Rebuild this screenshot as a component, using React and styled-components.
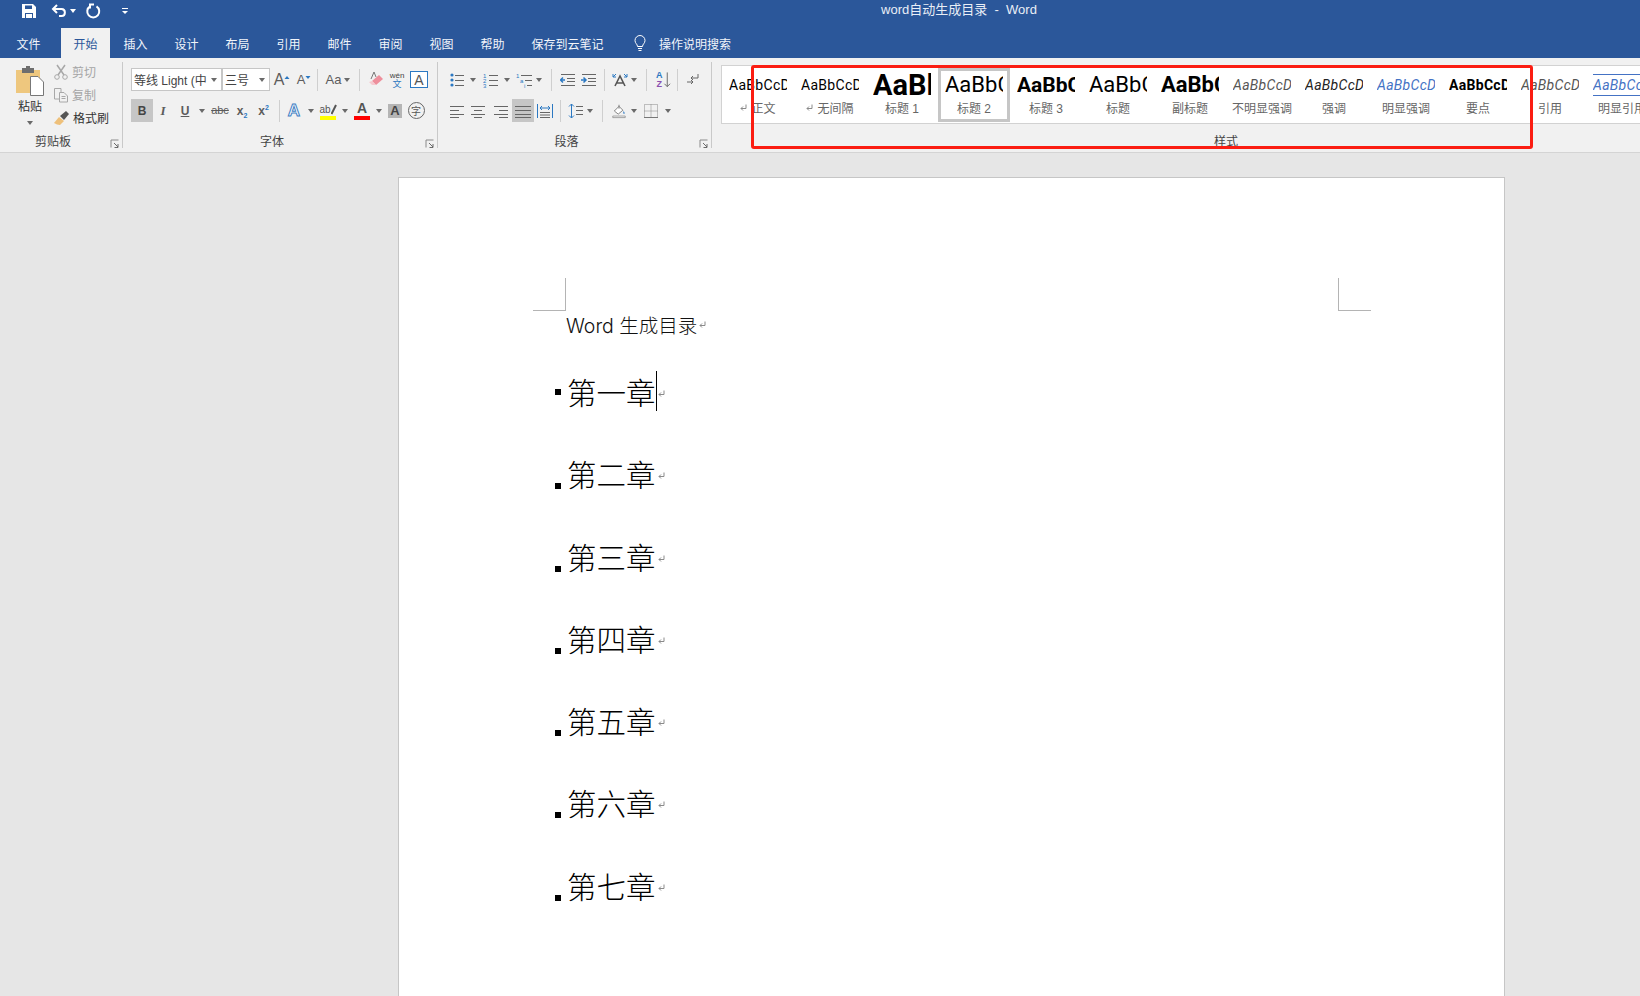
import React from 'react';
import styled, {createGlobalStyle, css} from 'styled-components';

const cjk = `"Liberation Sans", "Noto Sans CJK SC", sans-serif`;

const GlobalStyle = createGlobalStyle`
  html, body {
    margin: 0;
    padding: 0;
    height: 996px;
    overflow: hidden;
    background: #e6e6e6;
    font-family: ${cjk};
  }
`;

const Window = styled.div`
  width: 1640px;
  height: 996px;
  display: flex;
  flex-direction: column;
  position: relative;
  overflow: hidden;
`;

/* title bar + tabs */
const TitleBar = styled.div`
  height: 28px;
  background: #2b579a;
  display: flex;
  align-items: center;
`;

const QuickBar = styled.div`
  width: 278px;
  display: flex;
  align-items: center;
  padding-left: 21px;
  margin-top: -6px;
  box-sizing: border-box;
`;

const QuickBtn = styled.div`
  width: ${p => p.$w}px;
  display: flex;
  align-items: center;
`;

const DocTitle = styled.div`
  flex: 1;
  text-align: center;
  color: #e9eef6;
  font-size: 13px;
  white-space: pre;
  margin-top: -12px;
`;

const TabBar = styled.div`
  height: 30px;
  background: #2b579a;
  display: flex;
  padding-left: 3px;
`;

const Tab = styled.div`
  width: ${p => p.$w || 51}px;
  display: flex;
  align-items: center;
  justify-content: center;
  color: #f2f5fa;
  font-size: 12px;
  white-space: nowrap;
  ${p => p.$active && css`
    background: #f1f1f1;
    color: #2b579a;
    margin: 0 0 0 7px;
  `}
`;

const SearchHint = styled.div`
  display: flex;
  align-items: center;
  gap: 12px;
  color: #f2f5fa;
  font-size: 12px;
  margin-left: 16px;
`;

/* ribbon */
const Ribbon = styled.div`
  height: 94px;
  background: #f1f1f1;
  border-bottom: 1px solid #d4d4d4;
  display: flex;
  overflow: hidden;
`;

const Group = styled.div`
  width: ${p => p.$w ? `${p.$w}px` : 'auto'};
  flex: ${p => p.$w ? '0 0 auto' : '1'};
  min-width: 0;
  box-sizing: border-box;
  height: 86px;
  margin-top: 4px;
  display: flex;
  flex-direction: column;
  border-right: ${p => p.$w ? '1px solid #c9c9c9' : '0'};
`;

const Rows = styled.div`
  display: flex;
  flex-direction: column;
  gap: 8px;
  height: 54px;
  padding: 6px 0 0 ${p => p.$pl}px;
`;

const Row = styled.div`
  display: flex;
  align-items: center;
  height: 23px;
`;

const GroupLabel = styled.div`
  margin: auto 3px -1px 0;
  height: 17px;
  flex: none;
  display: flex;
  align-items: center;
  font-size: 12px;
  color: #444;
  span {
    flex: 1;
    text-align: center;
  }
`;

const Launcher = styled.svg`
  width: 13px;
  height: 9px;
  margin-top: 6px;
`;

const Tool = styled.div`
  width: ${p => p.$w}px;
  height: 23px;
  flex: none;
  display: flex;
  align-items: center;
  justify-content: center;
  color: #5c5c5c;
  ${p => p.$on && css`background: #c6c6c6;`}
`;

const Caret = styled.i`
  display: block;
  flex: none;
  width: 0;
  height: 0;
  margin-left: ${p => p.$ml || 0}px;
  border-left: 3.5px solid transparent;
  border-right: 3.5px solid transparent;
  border-top: 4px solid ${p => p.$c || '#6a6a6a'};
`;

const Sep = styled.div`
  width: ${p => p.$w || 6}px;
  flex: none;
  height: 22px;
  display: flex;
  justify-content: center;
  &::after {
    content: '';
    width: 1px;
    background: #cfcfcf;
  }
`;

const Glyph = styled.span`
  font-family: ${p => p.$serif ? '"Liberation Serif", serif' : '"Liberation Sans", sans-serif'};
  font-size: ${p => p.$s || 14}px;
  font-weight: ${p => p.$b ? 700 : 400};
  font-style: ${p => p.$i ? 'italic' : 'normal'};
  text-decoration: ${p => p.$u ? 'underline' : p.$st ? 'line-through' : 'none'};
  color: ${p => p.$c || '#5c5c5c'};
  line-height: 1;
`;

const OutlineA = styled(Glyph)`
  -webkit-text-stroke: 1px #3f7fc4;
`;

const SortLetters = styled(Glyph)`
  line-height: 9px;
  text-align: center;
  em {
    font-style: normal;
    color: #8a4fb0;
  }
`;

const Sub = styled.sub`
  font-size: 7px;
  color: #2b78c2;
  vertical-align: -3px;
  line-height: 0;
`;

const Sup = styled.sup`
  font-size: 7px;
  color: #2b78c2;
  vertical-align: 5px;
  line-height: 0;
`;

/* clipboard */
const ClipBody = styled.div`
  display: flex;
  height: 70px;
`;

const PasteCol = styled.div`
  width: 38px;
  margin-left: 11px;
  display: flex;
  flex-direction: column;
  align-items: center;
  font-size: 12px;
  color: #333;
  span { margin-top: 0; }
  i { margin-top: 7px; }
  svg { margin-top: 3px; }
`;

const ClipList = styled.div`
  display: flex;
  flex-direction: column;
  margin-left: 4px;
  margin-top: -2px;
`;

const ClipItem = styled.div`
  height: 23px;
  display: flex;
  align-items: center;
  gap: 3px;
  font-size: 12px;
  color: ${p => p.$off ? '#a5a5a5' : '#333'};
`;

/* font pickers */
const Picker = styled.div`
  width: ${p => p.$w}px;
  height: 23px;
  flex: none;
  box-sizing: border-box;
  background: #fff;
  border: 1px solid #c6c6c6;
  display: flex;
  align-items: center;
  gap: 3px;
  padding: 0 4px 0 2px;
  font-size: 12px;
  color: #444;
  span {
    flex: 1;
    min-width: 0;
    white-space: nowrap;
  }
`;

const BoxA = styled.div`
  width: 16px;
  height: 15px;
  border: 1px solid #2b78c2;
  display: flex;
  align-items: center;
  justify-content: center;
  font-size: 14px;
  color: #555;
  background: #fff;
`;

const ShadeA = styled.div`
  width: 14px;
  height: 14px;
  background: #b5b5b5;
  display: flex;
  align-items: center;
  justify-content: center;
  font-size: 13px;
  font-weight: 700;
  color: #444;
`;

const CircleChar = styled.div`
  width: 15px;
  height: 15px;
  border: 1px solid #666;
  border-radius: 50%;
  display: flex;
  align-items: center;
  justify-content: center;
  font-size: 10px;
  color: #555;
`;

const ColorA = styled.div`
  display: flex;
  flex-direction: column;
  align-items: center;
  width: 16px;
  font-size: 14px;
  line-height: 13px;
  font-weight: 700;
  color: #555;
  &::after {
    content: '';
    width: 16px;
    height: 4px;
    margin-top: 1px;
    background: ${p => p.$c};
  }
`;

const PenMark = styled.div`
  height: 13px;
  display: flex;
  align-items: flex-end;
`;

const Wen = styled.div`
  display: flex;
  flex-direction: column;
  align-items: center;
  font-size: 8px;
  line-height: 8px;
  color: #444;
  b {
    font-weight: 400;
    font-size: 9px;
    color: #2b78c2;
  }
`;

/* styles gallery */
const StylesGroup = styled(Group)`
  padding-left: 9px;
  overflow: hidden;
`;

const Gallery = styled.div`
  height: 59px;
  margin-top: 3px;
  box-sizing: border-box;
  background: #fff;
  border: 1px solid #d2d2d2;
  border-right: 0;
  width: 1000px;
  display: flex;
  align-items: center;
  flex: none;
`;

const StyleItem = styled.div`
  width: 72px;
  height: 54px;
  flex: none;
  box-sizing: border-box;
  border: 3px solid ${p => p.$on ? '#c6c6c6' : 'transparent'};
  display: flex;
  flex-direction: column;
  align-items: center;
`;

const Sample = styled.div`
  width: 58px;
  height: 28px;
  overflow: hidden;
  white-space: nowrap;
  display: flex;
  align-items: center;
  font-family: Roboto, sans-serif;
  font-size: ${p => p.$s}px;
  font-weight: ${p => p.$b ? 700 : 400};
  font-style: ${p => p.$i ? 'italic' : 'normal'};
  letter-spacing: ${p => p.$s < 20 ? '0.3px' : '0'};
  color: ${p => p.$c || '#000'};
  span {
    ${p => p.$lined && css`
      border-top: 1px solid #4472c4;
      border-bottom: 1px solid #4472c4;
      padding: 2px 0;
    `}
  }
`;

const StyleName = styled.div`
  font-size: 12px;
  color: #666;
  white-space: nowrap;
  display: flex;
  align-items: center;
  gap: 4px;
`;

const StylesLabel = styled(GroupLabel)`
  width: 1010px;
`;

/* document */
const Workspace = styled.div`
  flex: 1;
  background: #e6e6e6;
  padding: 24px 0 0 398px;
  overflow: hidden;
`;

const Page = styled.div`
  width: 1107px;
  height: 900px;
  box-sizing: border-box;
  background: #fff;
  border: 1px solid #c6c6c6;
  padding: 100px 133px 0 134px;
`;

const Marks = styled.div`
  display: flex;
  justify-content: space-between;
`;

const Mark = styled.div`
  width: 32px;
  height: 32px;
  border-bottom: 1px solid #b4b4b4;
  ${p => p.$right
    ? css`border-left: 1px solid #b4b4b4;`
    : css`border-right: 1px solid #b4b4b4;`}
`;

const DocTitleLine = styled.div`
  margin: -1px 0 0 33px;
  height: 28px;
  display: flex;
  align-items: center;
  font-family: Inter, "Noto Sans CJK SC", sans-serif;
  font-weight: 300;
  font-size: 19.5px;
  color: #111;
`;

const Chapters = styled.div`
  margin-top: 32px;
  display: flex;
  flex-direction: column;
`;

const Chapter = styled.div`
  height: 82.25px;
  display: flex;
  align-items: flex-start;
  font-family: "Noto Sans CJK SC", sans-serif;
  font-weight: 300;
  font-size: 29.5px;
  line-height: 42px;
  color: #000;
`;

const Bullet = styled.i`
  width: 6px;
  height: 6px;
  background: #000;
  flex: none;
  margin: ${p => p.$low ? '31px' : '19px'} 6px 0 22px;
`;

const ChapterText = styled.div`
  position: relative;
`;

const TextCaret = styled.i`
  position: absolute;
  right: -1px;
  top: 1px;
  width: 1px;
  height: 40px;
  background: #000;
`;

const ParaMark = styled.svg`
  width: 7px;
  height: 7px;
  flex: none;
  margin: ${p => p.$m || '0 0 0 2px'};
`;

/* annotation drawn on the screenshot */
const Annotation = styled.div`
  position: absolute;
  left: 751px;
  top: 65px;
  width: 782px;
  height: 84px;
  box-sizing: border-box;
  border: 3px solid #fb1d12;
  border-radius: 3px;
  pointer-events: none;
`;

const Ico = ({w = 16, h = 16, children, ...rest}) => (
  <svg width={w} height={h} viewBox={`0 0 ${w} ${h}`} fill="none" {...rest}>{children}</svg>
);

const ParaIcon = ({m}) => (
  <ParaMark $m={m} viewBox="0 0 7 7" fill="none" stroke="#8a8a8a" strokeWidth="1">
    <path d="M6 0.5V4.5H1M3 2.5L1 4.5L3 6.5" />
  </ParaMark>
);

const Lines = ({ys, x1 = 1, x2 = 15, ...rest}) => (
  <Ico {...rest}>
    {ys.map((y, i) => {
      const a = Array.isArray(x1) ? x1[i] : x1;
      const b = Array.isArray(x2) ? x2[i] : x2;
      return <path key={i} d={`M${a} ${y}.5H${b}`} stroke="#666" />;
    })}
  </Ico>
);

const LaunchIcon = () => (
  <Launcher viewBox="0 0 13 9" fill="none">
    <path d="M5 8.5V1H12.5" stroke="#8a8a8a" />
    <path d="M8 4L12 8M12 5V8.5H8.5" stroke="#6a6a6a" />
  </Launcher>
);

function Label({text}) {
  return <GroupLabel><span>{text}</span><LaunchIcon /></GroupLabel>;
}

const styleList = [
  {name: '正文', s: 14, para: true},
  {name: '无间隔', s: 14, para: true},
  {name: '标题 1', s: 29, b: true, text: 'AaBl'},
  {name: '标题 2', s: 22, on: true, text: 'AaBbC'},
  {name: '标题 3', s: 21, b: true, text: 'AaBbC'},
  {name: '标题', s: 22, text: 'AaBbC'},
  {name: '副标题', s: 22, b: true, text: 'AaBbC'},
  {name: '不明显强调', s: 14, i: true, c: '#555'},
  {name: '强调', s: 14, i: true, c: '#222'},
  {name: '明显强调', s: 14, i: true, c: '#4472c4'},
  {name: '要点', s: 14, b: true},
  {name: '引用', s: 14, i: true, c: '#555'},
  {name: '明显引用', s: 14, i: true, c: '#4472c4', lined: true},
];

const chapters = ['第一章', '第二章', '第三章', '第四章', '第五章', '第六章', '第七章'];

export default function App() {
  return (
    <Window>
      <GlobalStyle />
      <TitleBar>
        <QuickBar>
          <QuickBtn $w={30}>
            <Ico>
              <path d="M1 1H12L15 4V15H1Z" fill="#fff" />
              <path d="M4 2.5H11V6H4Z" fill="#2b579a" />
              <path d="M4 10H12V15H4Z" fill="#2b579a" />
              <path d="M5 11H11V15H5Z" fill="#fff" />
            </Ico>
          </QuickBtn>
          <QuickBtn $w={35}>
            <Ico>
              <path d="M6 2L2 6L6 10M2.5 6H10.5C15 6 15 13 10.5 13H8" stroke="#fff" strokeWidth="2" />
            </Ico>
            <Caret $c="#fff" $ml={3} />
          </QuickBtn>
          <QuickBtn $w={35}>
            <Ico style={{marginLeft: -1}}>
              <path d="M5 3.4A6 6 0 1 0 11.5 3.4" stroke="#fff" strokeWidth="2" />
              <path d="M9 1.5H5V5.5" stroke="#fff" strokeWidth="2" />
            </Ico>
          </QuickBtn>
          <QuickBtn $w={12}>
            <Ico w={8} h={8}>
              <path d="M1 1.5H7" stroke="#fff" />
              <path d="M1 4L4 7L7 4Z" fill="#fff" />
            </Ico>
          </QuickBtn>
        </QuickBar>
        <DocTitle>word自动生成目录  -  Word</DocTitle>
      </TitleBar>

      <TabBar>
        <Tab>文件</Tab>
        <Tab $active $w={49}>开始</Tab>
        <Tab>插入</Tab>
        <Tab>设计</Tab>
        <Tab>布局</Tab>
        <Tab>引用</Tab>
        <Tab>邮件</Tab>
        <Tab>审阅</Tab>
        <Tab>视图</Tab>
        <Tab>帮助</Tab>
        <Tab $w={99}>保存到云笔记</Tab>
        <SearchHint>
          <Ico w={14} h={18}>
            <path d="M4.5 12.5C4.5 10 2 9.5 2 6.5A5 5 0 0 1 12 6.5C12 9.5 9.5 10 9.5 12.5Z" stroke="#fff" />
            <path d="M5 14.5H9M5.5 16.5H8.5" stroke="#fff" />
          </Ico>
          操作说明搜索
        </SearchHint>
      </TabBar>

      <Ribbon>
        <Group $w={123}>
          <ClipBody>
            <PasteCol>
              <Ico w={28} h={32}>
                <path d="M0 5H24V28H0Z" fill="#eec77e" />
                <path d="M6 3H18V8H6Z" fill="#6e6e6e" />
                <path d="M10 1H14V4H10Z" fill="#6e6e6e" />
                <path d="M14.5 11.5H22L27.5 17V30.5H14.5Z" fill="#fff" stroke="#777" />
              </Ico>
              <span>粘贴</span>
              <Caret />
            </PasteCol>
            <ClipList>
              <ClipItem $off>
                <Ico>
                  <path d="M4 1L11 11M12 1L5 11" stroke="#a8a8a8" strokeWidth="1.5" />
                  <circle cx="4" cy="13" r="2.3" stroke="#a8a8a8" />
                  <circle cx="12" cy="13" r="2.3" stroke="#a8a8a8" />
                </Ico>
                剪切
              </ClipItem>
              <ClipItem $off>
                <Ico>
                  <path d="M1.5 1.5H8L8 12H1.5Z" fill="#f1f1f1" stroke="#a8a8a8" />
                  <path d="M6.5 5.5H11L14.5 9V15H6.5Z" fill="#f1f1f1" stroke="#a8a8a8" />
                  <path d="M8.5 9.5H12.5M8.5 11.5H12.5" stroke="#a8a8a8" />
                </Ico>
                复制
              </ClipItem>
              <ClipItem>
                <Ico w={17}>
                  <path d="M1 13L6 7L11 11L7 15C5 15 3 14 1 13Z" fill="#eec07a" />
                  <path d="M7 6L13 1L16 4L11 10Z" fill="#555" />
                </Ico>
                格式刷
              </ClipItem>
            </ClipList>
          </ClipBody>
          <Label text="剪贴板" />
        </Group>

        <Group $w={315}>
          <Rows $pl={8}>
            <Row>
              <Picker $w={91}><span>等线 Light (中</span><Caret /></Picker>
              <Picker $w={48}><span>三号</span><Caret /></Picker>
              <Tool $w={24}>
                <Glyph $s={16}>A</Glyph>
                <Ico w={6} h={12}><path d="M0.5 5L3 2L5.5 5Z" fill="#2b78c2" /></Ico>
              </Tool>
              <Tool $w={20}>
                <Glyph $s={13}>A</Glyph>
                <Ico w={6} h={12}><path d="M0.5 2H5.5L3 5Z" fill="#2b78c2" /></Ico>
              </Tool>
              <Sep />
              <Tool $w={36}>
                <Glyph $s={13}>Aa</Glyph>
                <Caret $ml={3} />
              </Tool>
              <Sep />
              <Tool $w={28}>
                <Ico w={18} h={18}>
                  <path d="M9 14L16 8L12 4L5 10Z" fill="#ee8f9c" />
                  <path d="M5 10L9 14H5L2 11Z" fill="#f6c9cf" />
                  <path d="M4 8L7 1L9 6" stroke="#777" />
                </Ico>
              </Tool>
              <Tool $w={14}>
                <Wen>wén<b>文</b></Wen>
              </Tool>
              <Tool $w={30}>
                <BoxA>A</BoxA>
              </Tool>
            </Row>
            <Row>
              <Tool $w={22} $on><Glyph $b $s={12} $c="#444">B</Glyph></Tool>
              <Tool $w={20}><Glyph $i $b $serif $s={13}>I</Glyph></Tool>
              <Tool $w={24}><Glyph $u $b $s={12}>U</Glyph></Tool>
              <Tool $w={10}><Caret /></Tool>
              <Tool $w={26}><Glyph $st $s={11}>abc</Glyph></Tool>
              <Tool $w={18}><Glyph $b $s={12}>x<Sub>2</Sub></Glyph></Tool>
              <Tool $w={25}><Glyph $b $s={12}>x<Sup>2</Sup></Glyph></Tool>
              <Sep />
              <Tool $w={24}>
                <OutlineA $b $s={17} $c="#fff">A</OutlineA>
              </Tool>
              <Tool $w={10}><Caret /></Tool>
              <Tool $w={24}>
                <ColorA $c="#ffff00">
                  <PenMark>
                    <Glyph $s={10} $c="#555">ab</Glyph>
                    <Ico w={6} h={12}><path d="M0.5 11L5 2" stroke="#555" strokeWidth="2" /></Ico>
                  </PenMark>
                </ColorA>
              </Tool>
              <Tool $w={10}><Caret /></Tool>
              <Tool $w={24}><ColorA $c="#ff0000">A</ColorA></Tool>
              <Tool $w={10}><Caret /></Tool>
              <Tool $w={22}><ShadeA>A</ShadeA></Tool>
              <Tool $w={20}><CircleChar>字</CircleChar></Tool>
            </Row>
          </Rows>
          <Label text="字体" />
        </Group>

        <Group $w={274}>
          <Rows $pl={10}>
            <Row>
              <Tool $w={17}>
                <Ico w={14}>
                  <circle cx="2" cy="3" r="1.6" fill="#2b78c2" />
                  <circle cx="2" cy="8" r="1.6" fill="#2b78c2" />
                  <circle cx="2" cy="13" r="1.6" fill="#2b78c2" />
                  <path d="M5 3.5H14M5 8.5H14M5 13.5H14" stroke="#666" />
                </Ico>
              </Tool>
              <Tool $w={16}><Caret /></Tool>
              <Tool $w={20}>
                <Ico>
                  <text x="0" y="6" fontSize="6" fill="#2b78c2" fontFamily="Liberation Sans">1</text>
                  <text x="0" y="11" fontSize="6" fill="#2b78c2" fontFamily="Liberation Sans">2</text>
                  <text x="0" y="16" fontSize="6" fill="#2b78c2" fontFamily="Liberation Sans">3</text>
                  <path d="M6 3.5H15M6 8.5H15M6 13.5H15" stroke="#666" />
                </Ico>
              </Tool>
              <Tool $w={12}><Caret /></Tool>
              <Tool $w={21}>
                <Ico>
                  <text x="0" y="6" fontSize="6" fill="#2b78c2" fontFamily="Liberation Sans">1</text>
                  <text x="4" y="11" fontSize="6" fill="#2b78c2" fontFamily="Liberation Sans">a</text>
                  <text x="8" y="16" fontSize="6" fill="#2b78c2" fontFamily="Liberation Sans">i</text>
                  <path d="M5 3.5H16M9 8.5H16M11 13.5H16" stroke="#666" />
                </Ico>
              </Tool>
              <Tool $w={10}><Caret /></Tool>
              <Sep $w={14} />
              <Tool $w={19}>
                <Ico>
                  <path d="M1 2.5H15M7 6.5H15M7 9.5H15M1 13.5H15" stroke="#666" />
                  <path d="M5 8H1M3 5.5L0.5 8L3 10.5" stroke="#2b78c2" strokeWidth="1.5" />
                </Ico>
              </Tool>
              <Tool $w={23}>
                <Ico>
                  <path d="M1 2.5H15M7 6.5H15M7 9.5H15M1 13.5H15" stroke="#666" />
                  <path d="M0 8H4.5M2.5 5.5L5 8L2.5 10.5" stroke="#2b78c2" strokeWidth="1.5" />
                </Ico>
              </Tool>
              <Sep $w={8} />
              <Tool $w={24}>
                <Ico>
                  <path d="M3 14L8 4L13 14M5 11H11" stroke="#555" strokeWidth="1.6" />
                  <path d="M1 5L4 2M1 2V5H4M15 5L12 2M15 2V5H12" stroke="#2b78c2" />
                </Ico>
              </Tool>
              <Tool $w={4}><Caret /></Tool>
              <Sep $w={20} />
              <Tool $w={15}>
                <SortLetters $b $s={9} $c="#2b78c2">A<br /><em>Z</em></SortLetters>
                <Ico w={9} h={18}><path d="M4.5 1V16M1.5 13L4.5 16L7.5 13" stroke="#666" /></Ico>
              </Tool>
              <Sep $w={12} />
              <Tool $w={20}>
                <Ico w={14} h={14}>
                  <path d="M12 1V5H5M7 3L5 5L7 7" stroke="#666" />
                  <path d="M1 9H7M5 7L7 9L5 11" stroke="#666" />
                </Ico>
              </Tool>
            </Row>
            <Row>
              <Tool $w={18}><Lines ys={[3, 7, 11, 14]} x2={[15, 10, 15, 10]} /></Tool>
              <Tool $w={24}><Lines ys={[3, 7, 11, 14]} x1={[1, 4, 1, 4]} x2={[15, 12, 15, 12]} /></Tool>
              <Tool $w={22}><Lines ys={[3, 7, 11, 14]} x1={[1, 6, 1, 6]} /></Tool>
              <Tool $w={22} $on><Lines ys={[3, 7, 11, 14]} x1={0} x2={16} /></Tool>
              <Tool $w={22}>
                <Ico>
                  <path d="M0.5 1V15M15.5 1V15" stroke="#2b78c2" />
                  <path d="M3 9.5H13M3 12H13M3 14.5H13" stroke="#666" />
                  <path d="M3 5H13M5 3L3 5L5 7M11 3L13 5L11 7" stroke="#2b78c2" />
                </Ico>
              </Tool>
              <Sep $w={8} />
              <Tool $w={24}>
                <Ico>
                  <path d="M3.5 1V15M1 3.5L3.5 1L6 3.5M1 12.5L3.5 15L6 12.5" stroke="#2b78c2" />
                  <path d="M8 3.5H15M8 7.5H15M8 11.5H15" stroke="#666" />
                </Ico>
              </Tool>
              <Tool $w={4}><Caret /></Tool>
              <Sep $w={20} />
              <Tool $w={14}>
                <Ico w={18} h={18}>
                  <path d="M3 9L9 3L14 8L8 13Z" fill="#fff" stroke="#666" />
                  <path d="M9 1V6" stroke="#666" />
                  <path d="M15 9C16 11 17 12 15.5 13C14 12 14.5 11 15 9Z" fill="#2b78c2" />
                  <path d="M1 15.5H17V17.5H1Z" fill="#fff" stroke="#888" />
                </Ico>
              </Tool>
              <Tool $w={16}><Caret /></Tool>
              <Tool $w={18}>
                <Ico w={14} h={14}>
                  <path d="M0.5 0.5H13.5V13.5H0.5ZM7 0.5V13.5M0.5 7H13.5" stroke="#888" strokeDasharray="1 1" />
                  <path d="M0 13.5H14" stroke="#777" />
                </Ico>
              </Tool>
              <Tool $w={16}><Caret /></Tool>
            </Row>
          </Rows>
          <Label text="段落" />
        </Group>

        <StylesGroup>
          <Gallery>
            {styleList.map(item => (
              <StyleItem key={item.name} $on={item.on}>
                <Sample $s={item.s} $b={item.b} $i={item.i} $c={item.c} $lined={item.lined}>
                  <span>{item.text || 'AaBbCcDd'}</span>
                </Sample>
                <StyleName>
                  {item.para && <ParaIcon m="0" />}
                  {item.name}
                </StyleName>
              </StyleItem>
            ))}
          </Gallery>
          <StylesLabel><span>样式</span></StylesLabel>
        </StylesGroup>
      </Ribbon>

      <Workspace>
        <Page>
          <Marks>
            <Mark />
            <Mark $right />
          </Marks>
          <DocTitleLine>Word 生成目录<ParaIcon /></DocTitleLine>
          <Chapters>
            {chapters.map((name, i) => (
              <Chapter key={name}>
                <Bullet $low={i > 0} />
                <ChapterText>
                  {name}
                  {i === 0 && <TextCaret />}
                </ChapterText>
                <ParaIcon m="20px 0 0 2px" />
              </Chapter>
            ))}
          </Chapters>
        </Page>
      </Workspace>

      <Annotation />
    </Window>
  );
}
